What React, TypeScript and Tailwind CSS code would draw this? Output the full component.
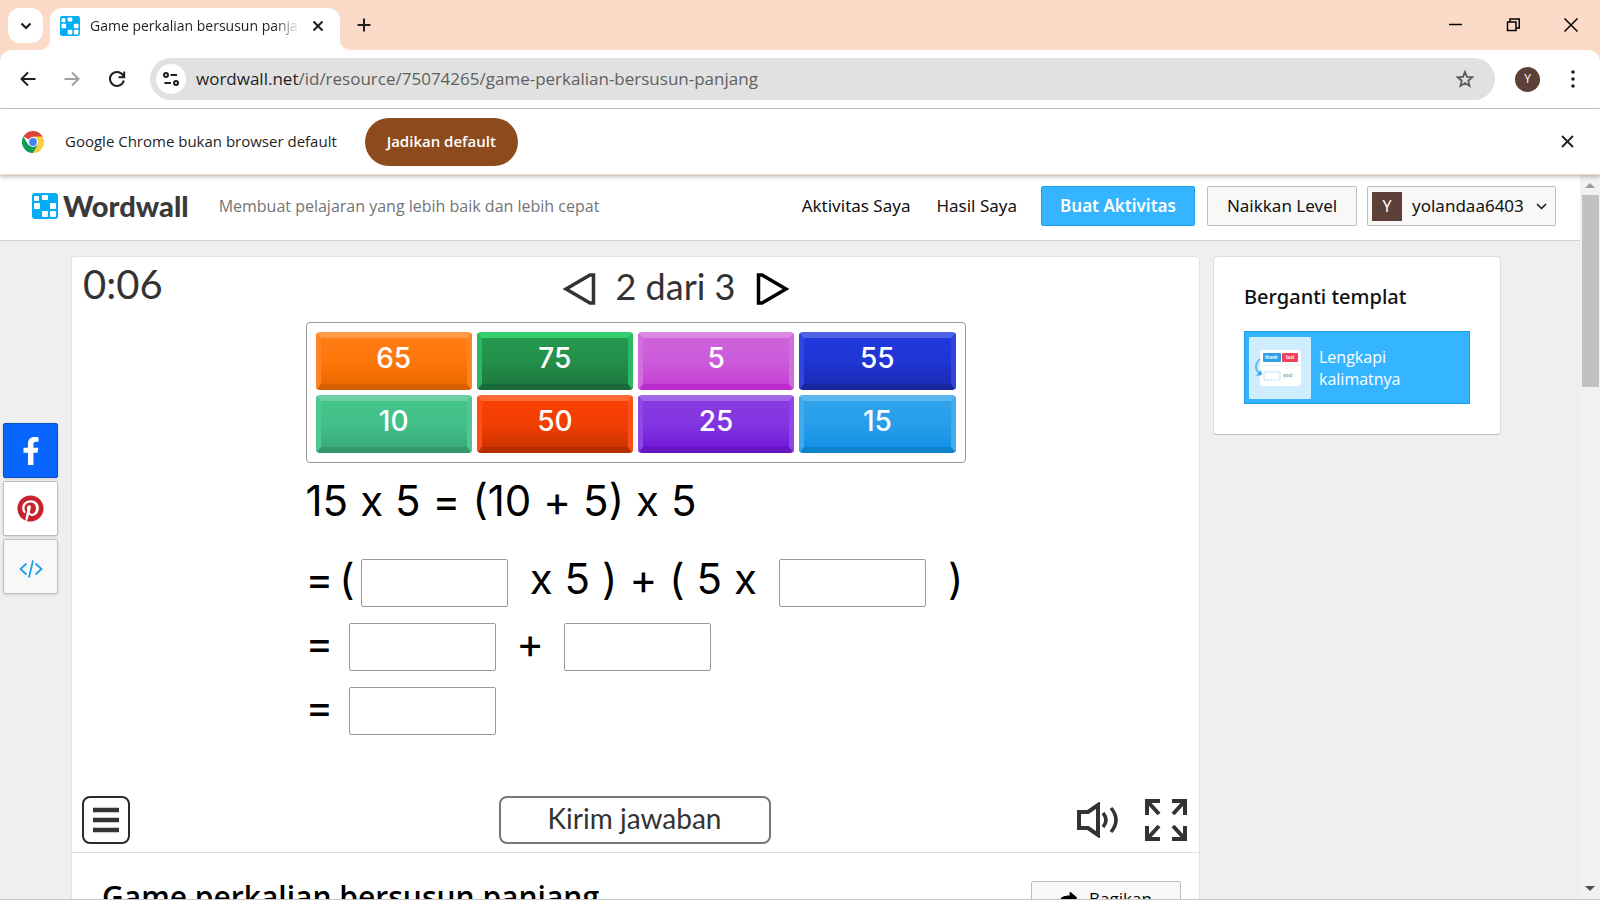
import type { ReactNode } from "react";
import { FaFacebookF, FaPinterest, FaShare } from "react-icons/fa";

const tiles = [
  { value: "65", style: "from-[#ff7d14] via-[#ff760a] to-[#ec6a00] border-t-[#ff9a47] border-x-[#ff8526] border-b-[#d86000]" },
  { value: "75", style: "from-[#25984f] via-[#239049] to-[#1e7a40] border-t-[#34d06f] border-x-[#2bb862] border-b-[#1a6a38]" },
  { value: "5", style: "from-[#cf62dc] via-[#cc5cda] to-[#c442d4] border-t-[#da88e4] border-x-[#d16ede] border-b-[#bb2bcd]" },
  { value: "55", style: "from-[#2138dd] via-[#1f35d4] to-[#1b2cb6] border-t-[#5063e4] border-x-[#3045de] border-b-[#18279f]" },
  { value: "10", style: "from-[#45c48b] via-[#42c089] to-[#39ac78] border-t-[#6bd0a3] border-x-[#50c893] border-b-[#329769]" },
  { value: "50", style: "from-[#f84003] via-[#f23e02] to-[#cf3400] border-t-[#ff6a37] border-x-[#ff4e14] border-b-[#b62e00]" },
  { value: "25", style: "from-[#883be2] via-[#8234e0] to-[#7319db] border-t-[#a167e9] border-x-[#8e46e4] border-b-[#6615c3]" },
  { value: "15", style: "from-[#2fa2ea] via-[#289eea] to-[#1192e6] border-t-[#5cb6ef] border-x-[#40aaec] border-b-[#1082cc]" },
];

function WordwallIcon({ size }: { size: number }) {
  return (
    <svg width={size} height={size} viewBox="0 0 26 26" className="shrink-0" aria-hidden="true">
      <rect width="26" height="26" rx="3" fill="#05aef4" />
      <g fill="#fff">
        <rect x="2" y="3" width="5" height="5" rx="1" />
        <rect x="10" y="2" width="6" height="5" rx="1" />
        <rect x="2" y="10" width="6" height="6" rx="1" />
        <rect x="18" y="10" width="6" height="6" rx="1" />
        <rect x="10" y="18" width="6" height="6" rx="1" />
        <rect x="18" y="18" width="6" height="6" rx="1" />
      </g>
    </svg>
  );
}

function ChromeIcon() {
  return (
    <svg width="22" height="22" viewBox="0 0 48 48" aria-hidden="true">
      <path d="M24 24 3.2 12A24 24 0 0 1 44.8 12Z" fill="#db4437" />
      <path d="M24 12h20.8A24 24 0 0 1 24 48l10.4-18Z" fill="#ffcd40" />
      <path d="M13.6 30 3.2 12A24 24 0 0 0 24 48l10.4-18Z" fill="#0f9d58" />
      <circle cx="24" cy="24" r="11" fill="#fff" />
      <circle cx="24" cy="24" r="8.5" fill="#4285f4" />
    </svg>
  );
}

function TabStrip() {
  return (
    <div className="flex h-[50px] bg-[#fcdac8] text-[#1f1f1f]">
      <button aria-label="Cari tab" className="mt-2 ml-2 flex h-[35px] w-[35px] items-center justify-center rounded-xl bg-white">
        <svg width="12" height="8" viewBox="0 0 12 8" fill="none" stroke="currentColor" strokeWidth="2.2">
          <path d="M1.5 1.5 6 6l4.5-4.5" />
        </svg>
      </button>
      <svg width="10" height="10" viewBox="0 0 10 10" className="-ml-[3px] mt-10 shrink-0" aria-hidden="true">
        <path d="M0 10A10 10 0 0 0 10 0V10Z" fill="#fff" />
      </svg>
      <div className="mt-2 flex w-[290px] items-center rounded-t-xl bg-white pr-3 pb-1.5 pl-2.5">
        <WordwallIcon size={20} />
        <span className="ml-2.5 flex-1 overflow-hidden text-sm whitespace-nowrap [mask-image:linear-gradient(to_right,black_88%,transparent)]">
          Game perkalian bersusun panjang
        </span>
        <button aria-label="Tutup tab" className="ml-2 p-1">
          <svg width="12" height="12" viewBox="0 0 12 12" stroke="currentColor" strokeWidth="2">
            <path d="m1.5 1.5 9 9m0-9-9 9" />
          </svg>
        </button>
      </div>
      <svg width="10" height="10" viewBox="0 0 10 10" className="mt-10 shrink-0" aria-hidden="true">
        <path d="M10 10A10 10 0 0 1 0 0V10Z" fill="#fff" />
      </svg>
      <button aria-label="Tab baru" className="ml-0.5 flex w-6 items-center justify-center">
        <svg width="14" height="14" viewBox="0 0 14 14" stroke="currentColor" strokeWidth="2">
          <path d="M7 .5v13M.5 7h13" />
        </svg>
      </button>
      <div className="ml-auto flex items-center gap-11 pr-[22px] text-black">
        <button aria-label="Perkecil">
          <svg width="14" height="14" viewBox="0 0 14 14" stroke="currentColor" strokeWidth="1.5">
            <path d="M1 6.5h13" />
          </svg>
        </button>
        <button aria-label="Pulihkan">
          <svg width="14" height="14" viewBox="0 0 14 14" fill="none" stroke="currentColor" strokeWidth="1.5">
            <path d="M1.5 4H10v8.500H1.5zM4 4V1h9.300v9H10" />
          </svg>
        </button>
        <button aria-label="Tutup">
          <svg width="14" height="14" viewBox="0 0 14 14" stroke="currentColor" strokeWidth="1.5">
            <path d="m.5.5 13 13m0-13-13 13" />
          </svg>
        </button>
      </div>
    </div>
  );
}

function Toolbar() {
  return (
    <div className="bg-[#fcdac8]">
      <div className="flex h-[59px] items-center rounded-t-xl border-b border-[#c4c4c4] bg-white py-1 pr-6 pl-5 text-[#1f1f1f]">
        <button aria-label="Kembali">
          <svg width="16" height="16" viewBox="0 0 16 16" fill="none" stroke="currentColor" strokeWidth="2">
            <path d="M15.500 8H2M8 1.500 1.500 8 8 14.500" />
          </svg>
        </button>
        <button aria-label="Maju" className="ml-7 text-[#a0a0a0]">
          <svg width="16" height="16" viewBox="0 0 16 16" fill="none" stroke="currentColor" strokeWidth="2">
            <path d="M.5 8H14M8 1.500 14.500 8 8 14.500" />
          </svg>
        </button>
        <button aria-label="Muat ulang" className="ml-7">
          <svg width="18" height="18" viewBox="0 0 18 18" fill="none" stroke="currentColor" strokeWidth="2">
            <path d="M15.800 10.500A7 7 0 1 1 15 5.300L16 7M16.200 1.500V7.200H10.500" />
          </svg>
        </button>
        <div className="ml-6 flex h-[42px] flex-1 items-center rounded-full bg-[#e1e1e1] pr-5 pl-1.5">
          <button aria-label="Informasi situs" className="flex h-[30px] w-[30px] shrink-0 items-center justify-center rounded-full bg-white">
            <svg width="16" height="14" viewBox="0 0 16 14" fill="none" stroke="currentColor" strokeWidth="2">
              <circle cx="3" cy="3" r="2" />
              <path d="M7.500 3H14M1.500 11H8" />
              <circle cx="13" cy="11" r="2" />
            </svg>
          </button>
          <a href="#" className="ml-2.5 text-[17px] text-[#5f5f5f]">
            <span className="text-[#1f1f1f]">wordwall.net</span>/id/resource/75074265/game-perkalian-bersusun-panjang
          </a>
          <button aria-label="Tambahkan bookmark" className="ml-auto">
            <svg width="20" height="20" viewBox="0 0 20 20" fill="none" stroke="#5a5a5a" strokeWidth="1.8">
              <path d="m10 3 2 4.900 5.300.4-4 3.400 1.200 5.200L10 14.100l-4.500 2.800 1.200-5.200-4-3.400L8 7.900Z" />
            </svg>
          </button>
        </div>
        <button aria-label="Profil" className="ml-5 flex h-[25px] w-[25px] items-center justify-center rounded-full bg-[#5d4037] text-xs text-white">
          Y
        </button>
        <button aria-label="Menu Chrome" className="ml-[30px]">
          <svg width="6" height="18" viewBox="0 0 6 18" fill="currentColor">
            <circle cx="3" cy="2" r="1.8" />
            <circle cx="3" cy="9" r="1.8" />
            <circle cx="3" cy="16" r="1.8" />
          </svg>
        </button>
      </div>
    </div>
  );
}

function InfoBar() {
  return (
    <div className="relative z-10 flex h-[66px] items-center border-b border-[#f3d9ca] bg-white pr-[26px] pl-[22px] text-[15px] text-[#1f1f1f] shadow-[0_2px_4px_rgba(0,0,0,0.25)]">
      <ChromeIcon />
      <span className="ml-[21px]">Google Chrome bukan browser default</span>
      <button className="ml-7 h-12 w-[153px] rounded-full bg-[#8d4b1d] font-semibold whitespace-nowrap text-white">Jadikan default</button>
      <button aria-label="Tutup pemberitahuan" className="ml-auto">
        <svg width="13" height="13" viewBox="0 0 13 13" stroke="currentColor" strokeWidth="1.8">
          <path d="m1 1 11 11m0-11-11 11" />
        </svg>
      </button>
    </div>
  );
}

function SiteHeader() {
  return (
    <header className="flex h-[66px] shrink-0 items-center border-b border-[#cfcfcf] bg-white pr-6 pb-[3px] pl-8 font-['Noto_Sans',sans-serif] text-[#111]">
      <a href="#" className="flex items-center gap-[5px]">
        <WordwallIcon size={26} />
        <span className="font-['Lato',sans-serif] text-[29px] leading-8 font-black text-[#3a3a3a]">Wordwall</span>
      </a>
      <span className="ml-[30px] font-['Open_Sans',sans-serif] text-base whitespace-nowrap text-[#747474]">
        Membuat pelajaran yang lebih baik dan lebih cepat
      </span>
      <nav className="ml-auto flex items-center text-[17px] whitespace-nowrap">
        <a href="#">Aktivitas Saya</a>
        <a href="#" className="ml-[26px]">Hasil Saya</a>
        <button className="ml-6 h-10 w-[154px] rounded-xs border border-[#1b9ee8] bg-[#35b5ff] font-semibold text-white">Buat Aktivitas</button>
        <button className="ml-3 h-10 w-[150px] rounded-xs border border-[#bdbdbd] bg-[#f8f8f8]">Naikkan Level</button>
        <button className="ml-2.5 flex h-10 w-[189px] items-center rounded-xs border border-[#bdbdbd] bg-[#f8f8f8] pl-1">
          <span className="flex h-[29px] w-[30px] items-center justify-center bg-[#5d4037] text-base text-white">Y</span>
          <span className="ml-2.5">yolandaa6403</span>
          <svg width="11" height="7" viewBox="0 0 11 7" fill="none" stroke="currentColor" strokeWidth="1.5" className="ml-3">
            <path d="m1 1 4.500 4.500L10 1" />
          </svg>
        </button>
      </nav>
    </header>
  );
}

function Blank({ label, className = "" }: { label: string; className?: string }) {
  return <input aria-label={label} className={`h-12 w-[147px] rounded-xs border border-[#9a9a9a] bg-white text-center text-3xl ${className}`} />;
}

function Row({ children, gap = "gap-3" }: { children: ReactNode; gap?: string }) {
  return <div className={`flex h-12 items-center [&_span]:pb-2 ${gap}`}>{children}</div>;
}

function Game() {
  return (
    <section className="flex flex-col border-b border-[#dedede] pb-2 font-['Lato',sans-serif] text-[#333]">
      <div className="grid h-[65px] grid-cols-[1fr_660px_1fr]">
        <div className="pl-[11px] text-[40px] leading-[54px]">0:06</div>
        <div className="flex items-center justify-center gap-5 pb-0.5 pl-20">
          <button aria-label="Sebelumnya">
            <svg width="33" height="32" viewBox="0 0 33 32" fill="none" stroke="#333" strokeWidth="3.5">
              <path d="M30.500 2H27L3 16l24 14h3.500Z" />
            </svg>
          </button>
          <span className="pb-1.5 text-4xl">2 dari 3</span>
          <button aria-label="Berikutnya">
            <svg width="33" height="32" viewBox="0 0 33 32" fill="none" stroke="#000" strokeWidth="3.5">
              <path d="M2.500 2H6l24 14L6 30H2.500Z" />
            </svg>
          </button>
        </div>
      </div>

      <div className="mx-auto w-[660px] font-['Inter',sans-serif] text-[42px] leading-[48px] text-black">
        <div className="grid grid-cols-4 gap-[5px] rounded border border-[#999] p-[9px]">
          {tiles.map((tile) => (
            <button
              key={tile.value}
              className={`h-[58px] rounded-sm border-x-[5px] border-t-[6px] border-b-[6px] bg-linear-to-b pb-1.5 text-[28px] leading-8 font-medium text-white ${tile.style}`}
            >
              {tile.value}
            </button>
          ))}
        </div>
        <div className="mt-3.5 mb-[34px] flex h-12 items-center gap-3">
          <span>15</span>
          <span>x</span>
          <span>5</span>
          <span>=</span>
          <span>(10</span>
          <span>+</span>
          <span>5)</span>
          <span>x</span>
          <span>5</span>
        </div>
        <div className="flex flex-col gap-4">
          <Row>
            <div className="mr-2.5 flex items-center gap-1.5">
              <span>=</span>
              <span>(</span>
              <Blank label="Isian 1" />
            </div>
            <span>x</span>
            <span>5</span>
            <span>)</span>
            <span>+</span>
            <span>(</span>
            <span>5</span>
            <span>x</span>
            <Blank label="Isian 2" className="mx-2.5" />
            <span>)</span>
          </Row>
          <Row gap="gap-5">
            <span className="-mr-1">=</span>
            <Blank label="Isian 3" />
            <span>+</span>
            <Blank label="Isian 4" />
          </Row>
          <Row gap="gap-5">
            <span className="-mr-1">=</span>
            <Blank label="Isian 5" />
          </Row>
        </div>
      </div>

      <div className="mt-[61px] grid grid-cols-[1fr_272px_1fr] items-center pr-3 pl-2.5">
        <button aria-label="Menu" className="flex h-12 w-12 items-center justify-center rounded-lg border-2 border-[#2b2b2b]">
          <svg width="26" height="26" viewBox="0 0 26 26" stroke="#333" strokeWidth="4.5">
            <path d="M0 3h26M0 13h26M0 23h26" />
          </svg>
        </button>
        <button className="h-12 rounded-lg border-2 border-[#777] pb-1 text-[28px] leading-9">Kirim jawaban</button>
        <div className="flex items-center justify-end gap-[26px]">
          <button aria-label="Suara">
            <svg width="42" height="36" viewBox="0 0 42 36" fill="none" stroke="#333" strokeWidth="4">
              <path d="M2 10h9l10-7v30l-10-7H2Z" />
              <path d="M26 11q6 7 0 14M34 6q10 12 0 24" strokeWidth="3.5" />
            </svg>
          </button>
          <button aria-label="Layar penuh">
            <svg width="42" height="42" viewBox="0 0 42 42" fill="none" stroke="#333" strokeWidth="4">
              <path d="M2 16V2h13M27 2h13v14M40 27v13H27M15 40H2V27" />
              <path d="m3 3 11 12M39 3 28 15M39 39 28 27M3 39l11-12" />
            </svg>
          </button>
        </div>
      </div>
    </section>
  );
}

function ShareButtons() {
  return (
    <div className="absolute top-[248px] left-[3px] flex flex-col gap-[3px]">
      <button aria-label="Facebook" className="flex h-[55px] w-[55px] items-center justify-center rounded-xs border border-[#0b50c0] bg-[#0866ff] text-[28px] text-white shadow">
        <FaFacebookF />
      </button>
      <button aria-label="Pinterest" className="flex h-[55px] w-[55px] items-center justify-center rounded-xs border border-[#bdbdbd] bg-white text-[27px] text-[#c8232c] shadow">
        <FaPinterest />
      </button>
      <button aria-label="Sematkan" className="flex h-[55px] w-[55px] items-center justify-center rounded-xs border border-[#bdbdbd] bg-[#f8f8f8] pt-1 shadow">
        <svg width="24" height="18" viewBox="0 0 24 18" fill="none" stroke="#1a9ff0" strokeWidth="1.8">
          <path d="M7.500 3.500 1.500 9l6 5.500M16.500 3.500l6 5.500-6 5.500M14 .5 10 17.500" />
        </svg>
      </button>
    </div>
  );
}

function TemplateThumb() {
  return (
    <svg width="62" height="62" viewBox="0 0 62 62" aria-hidden="true">
      <rect width="62" height="62" rx="1" fill="#d0edff" />
      <rect x="11" y="13" width="41" height="36" rx="3" fill="#fff" />
      <path d="M11 28h41" stroke="#e6eef2" />
      <rect x="14" y="16" width="18" height="9" rx="1" fill="#2ba1e5" />
      <rect x="33" y="16" width="16" height="9" rx="1" fill="#f5405a" />
      <rect x="15" y="35" width="16" height="8" rx="1" fill="none" stroke="#a5d8f5" strokeDasharray="2 1" />
      <path d="M11 22q-8 8 0 15" fill="none" stroke="#5fbcf5" strokeWidth="2" />
      <path d="m7 39 6-1-1-5Z" fill="#3aa9ee" />
      <g fontSize="5" fontFamily="Lato, sans-serif" fontWeight="bold">
        <text x="16" y="22" fill="#fff">thank</text>
        <text x="37" y="22" fill="#fff">taxi</text>
        <text x="34" y="40" fill="#89969e">you!</text>
      </g>
    </svg>
  );
}

function Sidebar() {
  return (
    <aside className="w-[288px] rounded-sm border border-[#dedede] border-b-[#bdbdbd] bg-white px-[30px] pt-6 pb-[30px]">
      <h2 className="font-['Noto_Sans',sans-serif] text-xl leading-8 font-medium text-[#111]">Berganti templat</h2>
      <a href="#" className="mt-[18px] flex h-[73px] items-center border border-[#1b9ee8] bg-[#35b5ff] pl-1 text-base leading-[22px] text-white">
        <TemplateThumb />
        <span className="ml-2 w-[100px]">Lengkapi kalimatnya</span>
      </a>
    </aside>
  );
}

function ScrollBar() {
  return (
    <div className="flex w-5 shrink-0 flex-col items-center justify-between bg-[#f1f1f1] py-[7px]" aria-hidden="true">
      <div className="flex flex-col items-center gap-[7px]">
        <svg width="10" height="6" viewBox="0 0 10 6"><path d="M0 6 5 1l5 5Z" fill="#9b9b9b" /></svg>
        <div className="h-[192px] w-[17px] bg-[#c1c1c1]" />
      </div>
      <svg width="10" height="6" viewBox="0 0 10 6"><path d="M0 0 5 5l5-5Z" fill="#505050" /></svg>
    </div>
  );
}

export default function App() {
  return (
    <div className="flex h-screen flex-col overflow-hidden border-b border-[#c8c8c8] bg-white font-['Open_Sans',sans-serif]">
      <TabStrip />
      <Toolbar />
      <InfoBar />
      <div className="flex min-h-0 flex-1">
        <div className="relative flex min-w-0 flex-1 flex-col overflow-hidden bg-[#efefef]">
          <SiteHeader />
          <ShareButtons />
          <div className="flex items-start gap-[13px] pt-[15px] pr-[79px] pl-[71px]">
            <main className="min-w-0 flex-1 rounded-sm border border-[#e2e2e2] bg-white">
              <Game />
              <div className="flex items-start justify-between pt-7 pr-[18px] pb-8 pl-[30px] text-black">
                <h1 className="text-3xl leading-8 font-semibold">Game perkalian bersusun panjang</h1>
                <button className="flex h-10 w-[150px] items-center justify-center gap-3 rounded-xs border border-[#bdbdbd] bg-[#f8f8f8] pb-1 text-[17px]">
                  <FaShare />
                  Bagikan
                </button>
              </div>
            </main>
            <Sidebar />
          </div>
        </div>
        <ScrollBar />
      </div>
    </div>
  );
}
